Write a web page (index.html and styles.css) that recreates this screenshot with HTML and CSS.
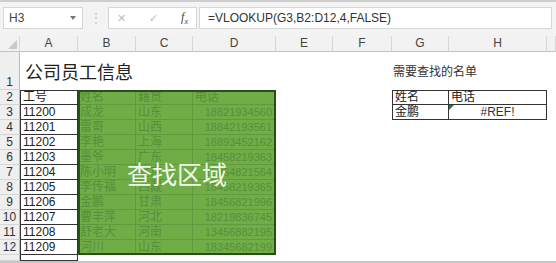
FILE: index.html
```html
<!DOCTYPE html>
<html lang="zh-CN">

<head>
    <meta charset="UTF-8">
    <title>VLOOKUP</title>
    <link rel="stylesheet" href="styles.css">
</head>

<body>
    <div class="toolbar">
        <div class="namebox"><span>H3</span><span class="caret"></span></div>
        <div class="grip">⋮</div>
        <div class="fxbox"><span class="mute">✕</span><span class="mute">✓</span><span class="fx">f<sub>x</sub></span></div>
        <div class="formula">=VLOOKUP(G3,B2:D12,4,FALSE)</div>
    </div>

    <div class="sheet">
        <!-- 列标 -->
        <div class="corner"><span class="tri"></span></div>
        <div class="ch">A</div><div class="ch">B</div><div class="ch">C</div><div class="ch">D</div>
        <div class="ch">E</div><div class="ch">F</div><div class="ch">G</div><div class="ch">H</div>
        <div class="ch fill"></div>

        <!-- 第1行 -->
        <div class="rh">1</div>
        <div class="c mid title">公司员工信息</div>
        <div class="c"></div><div class="c"></div><div class="c"></div><div class="c"></div><div class="c"></div>
        <div class="c mid note">需要查找的名单</div>
        <div class="c"></div><div class="c"></div>

        <!-- 第2行 -->
        <div class="rh">2</div>
        <div class="c a top">工号</div>
        <div class="c g">姓名</div><div class="c g">籍贯</div><div class="c g">电话</div>
        <div class="c"></div><div class="c"></div>
        <div class="c bx top lft">姓名</div><div class="c bx top">电话</div>
        <div class="c"></div>

        <div class="rh">3</div>
        <div class="c a">11200</div>
        <div class="c g">成龙</div><div class="c g">山东</div><div class="c g num">18821934560</div>
        <div class="c"></div><div class="c"></div>
        <div class="c bx lft">金鹏</div><div class="c bx err">#REF!</div>
        <div class="c"></div>

        <div class="rh">4</div>
        <div class="c a">11201</div>
        <div class="c g">雷哥</div><div class="c g">山西</div><div class="c g num">18842193561</div>
        <div class="c"></div><div class="c"></div><div class="c"></div><div class="c"></div><div class="c"></div>

        <div class="rh">5</div>
        <div class="c a">11202</div>
        <div class="c g">李艳</div><div class="c g">上海</div><div class="c g num">18893452162</div>
        <div class="c"></div><div class="c"></div><div class="c"></div><div class="c"></div><div class="c"></div>

        <div class="rh">6</div>
        <div class="c a">11203</div>
        <div class="c g">墨爷</div><div class="c g">广东</div><div class="c g num">18458219363</div>
        <div class="c"></div><div class="c"></div><div class="c"></div><div class="c"></div><div class="c"></div>

        <div class="rh">7</div>
        <div class="c a">11204</div>
        <div class="c g">陈小明</div><div class="c g">北京</div><div class="c g num">18864821564</div>
        <div class="c"></div><div class="c"></div><div class="c"></div><div class="c"></div><div class="c"></div>

        <div class="rh">8</div>
        <div class="c a">11205</div>
        <div class="c g">李传福</div><div class="c g">西藏</div><div class="c g num">18458219365</div>
        <div class="c"></div><div class="c"></div><div class="c"></div><div class="c"></div><div class="c"></div>

        <div class="rh">9</div>
        <div class="c a">11206</div>
        <div class="c g">金鹏</div><div class="c g">甘肃</div><div class="c g num">18456821996</div>
        <div class="c"></div><div class="c"></div><div class="c"></div><div class="c"></div><div class="c"></div>

        <div class="rh">10</div>
        <div class="c a">11207</div>
        <div class="c g">曹丰萍</div><div class="c g">河北</div><div class="c g num">18219836745</div>
        <div class="c"></div><div class="c"></div><div class="c"></div><div class="c"></div><div class="c"></div>

        <div class="rh">11</div>
        <div class="c a">11208</div>
        <div class="c g">舒老大</div><div class="c g">河南</div><div class="c g num">13456882195</div>
        <div class="c"></div><div class="c"></div><div class="c"></div><div class="c"></div><div class="c"></div>

        <div class="rh">12</div>
        <div class="c a">11209</div>
        <div class="c g">河川</div><div class="c g">山东</div><div class="c g num">18345682199</div>
        <div class="c"></div><div class="c"></div><div class="c"></div><div class="c"></div><div class="c"></div>

        <!-- 第13行，只露出一点 -->
        <div class="rh"></div>
        <div class="c a"></div>
        <div class="c"></div><div class="c"></div><div class="c"></div><div class="c"></div>
        <div class="c"></div><div class="c"></div><div class="c"></div><div class="c"></div>

        <!-- 查找区域 B2:D12 -->
        <div class="zone">查找区域</div>
    </div>
</body>

</html>
```

FILE: styles.css
```css
* {
    padding: 0;
    margin: 0;
    box-sizing: border-box;
}

body {
    width: 556px;
    height: 263px;
    overflow: hidden;
    background-color: white;
    font-family: "Liberation Sans", "Noto Sans CJK SC", sans-serif;
    font-size: 12px;
    color: #222;
}

/* 编辑栏 */
.toolbar {
    display: flex;
    align-items: flex-start;
    height: 36px;
    padding: 5px 4px 0 3px;
    border-top: 2px solid #cdcdcd;
    background-color: #f3f3f3;
}

.namebox,
.fxbox,
.formula {
    display: flex;
    align-items: center;
    height: 22px;
    background-color: white;
    border: 1px solid #d6d6d6;
}

.namebox {
    width: 80px;
    padding: 0 6px 0 5px;
    justify-content: space-between;
    color: #444;
}

.caret {
    border-left: 3px solid transparent;
    border-right: 3px solid transparent;
    border-top: 4px solid #777;
}

.grip {
    width: 25px;
    text-align: center;
    line-height: 22px;
    color: #c4c4c4;
    font-size: 12px;
}

.fxbox {
    width: 89px;
    padding: 0 8px 0 8px;
    justify-content: space-between;
}

.mute {
    color: #bdbdbd;
    font-family: "DejaVu Sans", sans-serif;
    font-size: 11px;
}

.fx {
    font-family: "Liberation Serif", serif;
    font-style: italic;
    font-size: 12px;
    color: #444;
}

.fx sub {
    font-size: 8px;
}

.formula {
    flex: 1;
    margin-left: 2px;
    padding-left: 8px;
    color: #333;
}

/* 表格 */
.sheet {
    position: relative;
    display: grid;
    grid-template-columns: 20px 58px 58px 57px 83px 57px 59px 57px 98px 1fr;
    grid-template-rows: 16px 38px repeat(11, 15px) 1fr;
    height: 227px;
    border-bottom: 2px solid #c6c6c6;
}

.corner,
.ch {
    background-color: #f2f2f2;
    border-bottom: 1px solid #c2c2c2;
    border-right: 1px solid #d8d8d8;
}

.corner {
    position: relative;
}

.tri {
    position: absolute;
    right: 2px;
    bottom: 2px;
    border-left: 9px solid transparent;
    border-bottom: 9px solid #c9c9c9;
}

.ch {
    text-align: center;
    line-height: 15px;
    color: #444;
}

.rh {
    display: flex;
    align-items: flex-end;
    justify-content: center;
    background-color: #efefef;
    border-bottom: 1px solid #d6d6d6;
    border-right: 1px solid #bcbcbc;
    line-height: 14px;
    color: #333;
}

.c {
    display: flex;
    align-items: flex-end;
    padding: 0 2px;
    line-height: 14px;
    white-space: nowrap;
}

.mid {
    align-items: center;
}

.title {
    padding-left: 5px;
    font-family: "Noto Sans CJK SC", sans-serif;
    font-size: 18px;
    color: #222;
}

.note {
    padding-left: 1px;
    font-family: "Noto Sans CJK SC", sans-serif;
    color: #333;
}

.a {
    border: 1px solid #333;
    border-top: none;
}

.a.top,
.bx.top {
    border-top: 1px solid #333;
}

.g {
    background-color: #70ad47;
    color: #578f3b;
    border-right: 1px solid #5f9b3e;
    border-bottom: 1px solid #5f9b3e;
}

.num {
    justify-content: flex-end;
    padding-right: 3px;
    font-size: 11px;
}

.bx {
    border-right: 1px solid #333;
    border-bottom: 1px solid #333;
}

.bx.lft {
    border-left: 1px solid #333;
}

.err {
    position: relative;
    justify-content: center;
    color: #333;
}

.err::before {
    content: "";
    position: absolute;
    left: 0;
    top: 0;
    border-top: 5px solid #1e7a3c;
    border-right: 5px solid transparent;
}

.zone {
    position: absolute;
    inset: 0;
    grid-column: 3 / 6;
    grid-row: 3 / 14;
    display: flex;
    align-items: center;
    justify-content: center;
    border: 2px solid #2a4f1a;
    font-family: "Noto Sans CJK SC", sans-serif;
    font-size: 25px;
    color: #eef8e6;
}
```
